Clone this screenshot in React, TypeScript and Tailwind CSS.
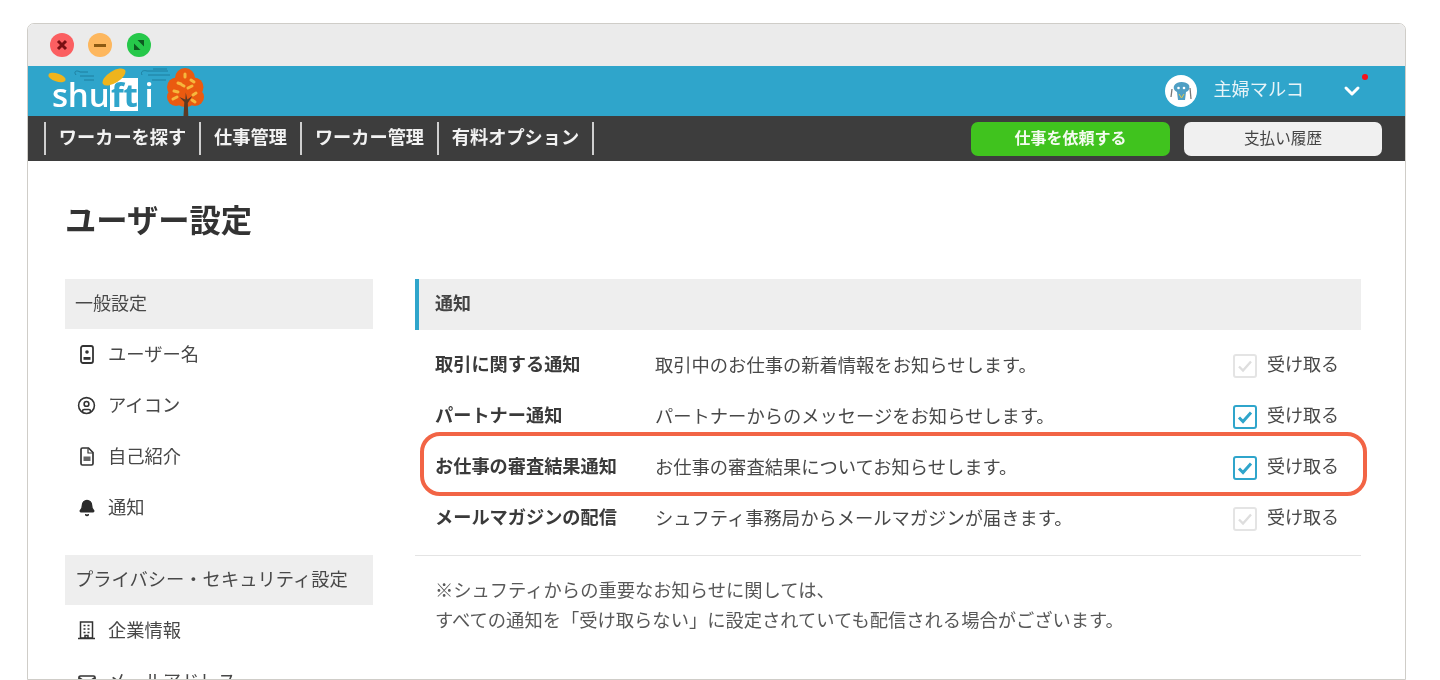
import { Bell, ChevronDown, CircleUser } from "lucide-react";

const cjk = "font-['Liberation_Sans','Noto_Sans_CJK_JP',sans-serif]";

type Row = {
  label: string;
  desc: string;
  active: boolean;
  highlight?: boolean;
};

const rows: Row[] = [
  { label: "取引に関する通知", desc: "取引中のお仕事の新着情報をお知らせします。", active: false },
  { label: "パートナー通知", desc: "パートナーからのメッセージをお知らせします。", active: true },
  { label: "お仕事の審査結果通知", desc: "お仕事の審査結果についてお知らせします。", active: true, highlight: true },
  { label: "メールマガジンの配信", desc: "シュフティ事務局からメールマガジンが届きます。", active: false },
];

function CardIcon() {
  return (
    <svg width="14" height="19" viewBox="0 0 14 19" fill="none">
      <rect x="1" y="1" width="12" height="17" rx="2" stroke="#333" strokeWidth="1.800" />
      <circle cx="7" cy="7" r="1.800" fill="#333" />
      <rect x="3.500" y="12" width="7" height="2.800" fill="#333" />
    </svg>
  );
}

function FileIcon() {
  return (
    <svg width="14" height="19" viewBox="0 0 14 19" fill="none">
      <path d="M2.500 1h6l4.500 4.500v11a1.500 1.500 0 0 1-1.500 1.500h-9a1.500 1.500 0 0 1-1.500-1.500v-14a1.500 1.500 0 0 1 1.500-1.500z" stroke="#333" strokeWidth="1.700" />
      <path d="M8 1.500v4.500h4.500" stroke="#333" strokeWidth="1.200" />
      <rect x="3.500" y="9.500" width="7" height="4.500" fill="#666" />
    </svg>
  );
}

function BuildingIcon() {
  return (
    <svg width="17" height="19" viewBox="0 0 17 19" fill="none" stroke="#333" strokeWidth="1.500">
      <rect x="2.500" y="1" width="12" height="16" />
      <path d="M0 17.500h17M5.500 4.500h2M9.500 4.500h2M5.500 8h2M9.500 8h2M5.500 11.500h2M9.500 11.500h2M7 17.500v-3h3v3" />
    </svg>
  );
}

function MailIcon() {
  return (
    <svg width="18" height="16" viewBox="0 0 18 16" fill="none" stroke="#333" strokeWidth="1.700">
      <rect x="1" y="2" width="16" height="12" rx="1.500" />
      <path d="M1.500 4l7.500 5 7.500-5" />
    </svg>
  );
}

function SideItem({ icon, label }: { icon: React.ReactNode; label: string }) {
  return (
    <div className="flex h-[51px] items-center text-[18.300px] text-[#484848]">
      <div className="flex w-[43px] justify-center">{icon}</div>
      <span>{label}</span>
    </div>
  );
}

function Logo() {
  return (
    <div className="relative h-[50px] w-[190px]">
      <div className="absolute left-[24px] top-[12px] flex items-center font-['Open_Sans',sans-serif] text-[33px] leading-[33px] font-semibold tracking-[-0.2px] text-white">
        <span>shu</span>
        <span className="ml-[1px] flex h-[33px] w-[28px] items-center justify-center bg-white font-bold text-[#2fa5cb]">ft</span>
        <span className="ml-[6px]">i</span>
      </div>
      <svg className="absolute left-0 top-0" width="190" height="50" viewBox="0 0 190 50" fill="none">
        <ellipse cx="29" cy="11.500" rx="9" ry="4" transform="rotate(18 29 11.500)" fill="#efb41c" />
        <ellipse cx="86" cy="11" rx="13" ry="6" transform="rotate(-32 86 11)" fill="#efb41c" />
        <path d="M48 9c-3-4 1-5 4-3h8M52 10h14M56 14h10M114 9c-2-4 2-5 5-4h21M120 9h22M124 14h14M125 3h14" stroke="#1f7f9f" strokeWidth="1" />
        <circle cx="157" cy="12" r="10" fill="#ea5a10" />
        <circle cx="148.500" cy="21" r="9.500" fill="#ea5a10" />
        <circle cx="166" cy="21" r="9.500" fill="#ea5a10" />
        <circle cx="148" cy="31" r="9" fill="#ea5a10" />
        <circle cx="167" cy="31" r="9" fill="#ea5a10" />
        <circle cx="157.500" cy="29" r="12" fill="#ea5a10" />
        <path d="M155.500 50l.8-14-5-5 6 2.500.5-7 1.500 7 5-3.500-4.500 7 .5 13z" fill="#5b3a24" />
        <path d="M157 8v3M150 17l3 1M163 14l3 2M146 25l4 1M160 22l4-2M168 27l-3 2M145 33l4-2M167 36l-3-2M154 19l2 1" stroke="#f6b73c" strokeWidth="3" strokeLinecap="round" />
      </svg>
    </div>
  );
}

function TrafficLights() {
  return (
    <div className="flex h-[42px] items-center gap-[14px] bg-[#ebebeb] pl-[22px]">
      <div className="flex h-6 w-6 items-center justify-center rounded-full bg-[#fb5f61]">
        <svg width="12" height="12" viewBox="0 0 12 12" stroke="#7a0f12" strokeWidth="3">
          <path d="M2 2l8 8M10 2l-8 8" />
        </svg>
      </div>
      <div className="flex h-6 w-6 items-center justify-center rounded-full bg-[#fdb75e]">
        <div className="h-[3px] w-[12px] bg-[#8c5a12]" />
      </div>
      <div className="ml-[1px] flex h-6 w-6 items-center justify-center rounded-full bg-[#26c84a]">
        <svg width="14" height="14" viewBox="0 0 14 14" fill="#0d5a20">
          <path d="M2 5.500V12h6.500zM12 8.500V2H5.500z" />
        </svg>
      </div>
    </div>
  );
}

function CheckBox({ active }: { active: boolean }) {
  const color = active ? "#2fa5cb" : "#dedede";
  return (
    <div className={`flex h-[24px] w-[24px] items-center justify-center rounded-[3px] border-[2.500px] bg-white ${active ? "border-[#2fa5cb]" : "border-[#e4e4e4]"}`}>
      <svg width="16" height="14" viewBox="0 0 16 14" fill="none" stroke={color} strokeWidth={active ? 3 : 2.400}>
        <path d="M2 7.500l4 4 8-9" />
      </svg>
    </div>
  );
}

export default function App() {
  return (
    <div className={`h-[680px] overflow-hidden bg-white pl-[27px] pt-[23px] blur-[0.5px] ${cjk}`}>
      <div className="h-[657px] w-[1379px] overflow-hidden rounded-t-[7px] border border-[#cfcdc8] bg-white">
        <TrafficLights />

        <header className="flex h-[50px] items-center justify-between bg-[#2fa5cb]">
          <Logo />
          <div className="flex items-center">
            <div className="flex h-[32px] w-[32px] items-center justify-center rounded-full bg-white">
              <svg width="26" height="26" viewBox="0 0 26 26">
                <path d="M6 8c2-5 12-5 15-1 1 3 0 6-3 7l-1 8h-7l-1-8c-2-1-4-3-3-6z" fill="#4f9fc4" />
                <circle cx="10.500" cy="10" r="1.300" fill="#fff" />
                <circle cx="16" cy="10" r="1.300" fill="#fff" />
                <path d="M11 16l2.500 4 2.500-4" stroke="#e5c94b" strokeWidth="1" fill="none" />
                <path d="M4 11l-1 8M22 10l1 11" stroke="#777" strokeWidth="1.300" />
              </svg>
            </div>
            <span className="ml-[16px] text-[18.200px] text-[#e8f4f8]">主婦マルコ</span>
            <div className="relative ml-[36px] mr-[41px]">
              <ChevronDown size={24} strokeWidth={3} color="#fff" />
              <div className="absolute -right-[4px] -top-[5px] h-[6px] w-[6px] rounded-full bg-[#f5121b]" />
            </div>
          </div>
        </header>

        <nav className="flex h-[45px] items-center justify-between bg-[#3d3d3d] pl-[16px] pr-[23px]">
          <div className="flex h-[33px] items-stretch border-l-2 border-[#cfcfcf] text-[18.200px] font-bold text-[#f2f2f2]">
            <div className="flex w-[155px] items-center justify-center border-r-2 border-[#cfcfcf] pt-[1px]">ワーカーを探す</div>
            <div className="flex w-[101px] items-center justify-center border-r-2 border-[#cfcfcf] pt-[1px]">仕事管理</div>
            <div className="flex w-[137px] items-center justify-center border-r-2 border-[#cfcfcf] pt-[1px]">ワーカー管理</div>
            <div className="flex w-[155px] items-center justify-center border-r-2 border-[#cfcfcf] pt-[1px]">有料オプション</div>
          </div>
          <div className="flex gap-[14px] text-[16px]">
            <div className="flex h-[34px] w-[199px] items-center justify-center rounded-[7px] bg-[#40c31e] font-bold text-[#f4fbf0]">仕事を依頼する</div>
            <div className="flex h-[34px] w-[198px] items-center justify-center rounded-[7px] bg-[#f0f0f0] text-[15.600px] text-[#444]">支払い履歴</div>
          </div>
        </nav>

        <div className="pl-[37px] pr-[43px]">
          <h1 className="flex h-[118px] items-center pt-[4px] text-[31.300px] font-bold text-[#333]">ユーザー設定</h1>

          <div className="flex gap-[42px]">
            <aside className="w-[308px] shrink-0">
              <div className="flex h-[50px] items-center bg-[#eeeeee] pl-[10px] text-[18px] text-[#484848]">一般設定</div>
              <SideItem icon={<CardIcon />} label="ユーザー名" />
              <SideItem icon={<CircleUser size={19} strokeWidth={2} color="#333" />} label="アイコン" />
              <SideItem icon={<FileIcon />} label="自己紹介" />
              <SideItem icon={<Bell size={18} fill="#2b2b2b" color="#2b2b2b" />} label="通知" />
              <div className="mt-[22px] flex h-[50px] items-center bg-[#eeeeee] pl-[10px] text-[18.300px] text-[#484848]">プライバシー・セキュリティ設定</div>
              <SideItem icon={<BuildingIcon />} label="企業情報" />
              <SideItem icon={<MailIcon />} label="メールアドレス" />
            </aside>

            <main className="w-[946px] shrink-0">
              <div className="flex h-[51px] items-center border-l-[4px] border-[#2fa5cb] bg-[#eeeeee] pl-[16px] text-[18px] font-bold text-[#444]">通知</div>

              <div className="mt-[10px] border-b border-[#e4e4e4] pb-[11px]">
                {rows.map((row) => (
                  <div key={row.label} className="relative flex h-[51px] items-center pl-[20px] pr-[22px] text-[18.300px] text-[#484848]">
                    <div className="w-[220px] shrink-0 text-[18.200px] font-bold text-[#3a3a3a]">{row.label}</div>
                    <div className="flex-1">{row.desc}</div>
                    <CheckBox active={row.active} />
                    <span className="ml-[10px] text-[18px]">受け取る</span>
                    {row.highlight && (
                      <div className="absolute -bottom-[3px] -right-[6px] -top-[10px] left-[5px] rounded-[20px] border-[4px] border-[#f26445]" />
                    )}
                  </div>
                ))}
              </div>

              <div className="pl-[20px] pt-[20px] text-[18.300px] leading-[30px] text-[#585858]">
                <p>※シュフティからの重要なお知らせに関しては、</p>
                <p>すべての通知を「受け取らない」に設定されていても配信される場合がございます。</p>
              </div>
            </main>
          </div>
        </div>
      </div>
    </div>
  );
}
